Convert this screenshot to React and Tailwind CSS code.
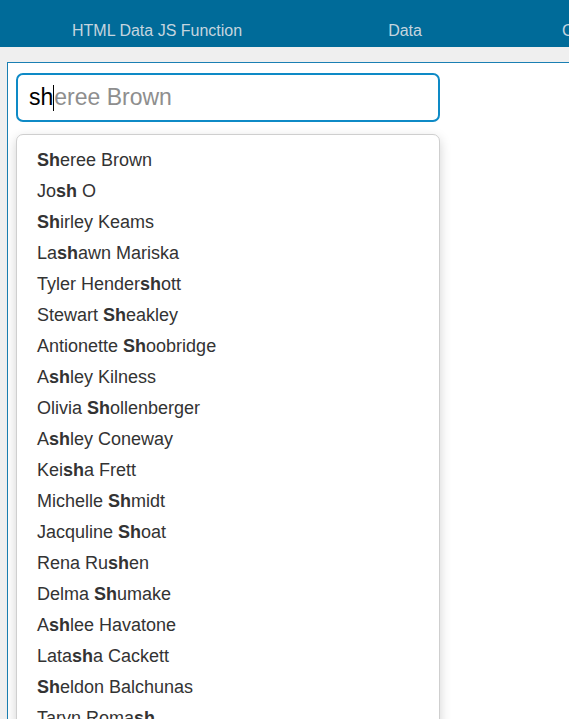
import { useState } from 'react'

const names = [
  ['', 'Sh', 'eree Brown'],
  ['Jo', 'sh', ' O'],
  ['', 'Sh', 'irley Keams'],
  ['La', 'sh', 'awn Mariska'],
  ['Tyler Hender', 'sh', 'ott'],
  ['Stewart ', 'Sh', 'eakley'],
  ['Antionette ', 'Sh', 'oobridge'],
  ['A', 'sh', 'ley Kilness'],
  ['Olivia ', 'Sh', 'ollenberger'],
  ['A', 'sh', 'ley Coneway'],
  ['Kei', 'sh', 'a Frett'],
  ['Michelle ', 'Sh', 'midt'],
  ['Jacquline ', 'Sh', 'oat'],
  ['Rena Ru', 'sh', 'en'],
  ['Delma ', 'Sh', 'umake'],
  ['A', 'sh', 'lee Havatone'],
  ['Lata', 'sh', 'a Cackett'],
  ['', 'Sh', 'eldon Balchunas'],
  ['Taryn Roma', 'sh', ''],
  ['Sha', 'na', ' Moss'],
]

export default function App() {
  const [query] = useState('sh')

  return (
    <div className="h-[719px] overflow-hidden bg-[#efefef] font-['Liberation_Sans',Arial,sans-serif]">
      {/* top nav */}
      <div className="h-[47px] bg-[#006b99] flex items-end pb-[4px] pl-[72px] text-[16px] text-[#c5d5df] whitespace-nowrap">
        <div>HTML Data JS Function</div>
        <div className="ml-[146px]">Data</div>
        <div className="ml-[140px]">CSS Styles</div>
      </div>

      {/* panel */}
      <div className="mt-[15px] ml-[7px] h-full bg-white border-t border-l border-[#1a7fb3] pt-[10px] pl-[8px]">
        <div className="w-[424px] h-[49px] rounded-[7px] border-2 border-[#0e8ac6] flex items-center pl-[11px] text-[23px] whitespace-pre">
          <span className="text-black">{query}</span>
          <span className="w-px h-[26px] bg-black" />
          <span className="text-[#8e8e8e]">eree Brown</span>
        </div>

        <div className="mt-[12px] w-[424px] rounded-[7px] border border-[#cfcfcf] shadow-[0_4px_12px_rgba(0,0,0,0.18)] pt-[10px] bg-white">
          {names.map(([a, b, c], i) => (
            <div key={i} className="h-[31px] leading-[31px] pl-[20px] text-[18px] text-[#333] whitespace-pre">
              {a}<b className="font-bold">{b}</b>{c}
            </div>
          ))}
        </div>
      </div>
    </div>
  )
}
